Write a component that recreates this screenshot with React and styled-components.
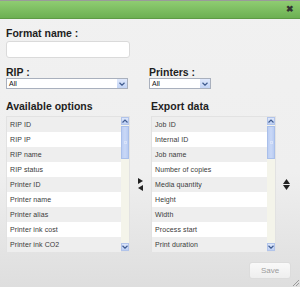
import React from "react";
import styled, { createGlobalStyle } from "styled-components";

const Global = createGlobalStyle`
  html, body { margin: 0; padding: 0; background: #e8e8e8; }
  body { font-family: "Liberation Sans", Arial, sans-serif; }
`;

const Dialog = styled.div`
  width: 300px;
  height: 287px;
  box-sizing: border-box;
  display: flex;
  flex-direction: column;
  background: linear-gradient(#f1f1f1 0%, #efefef 60%, #dedede 100%);
  position: relative;
  overflow: hidden;
`;

const TitleBar = styled.div`
  height: 19px;
  box-sizing: border-box;
  border-top: 1px solid #9a9a9a;
  border-bottom: 1px solid #5d9a45;
  background: linear-gradient(#8fcc72, #6cb052);
  display: flex;
  justify-content: flex-end;
  align-items: center;
  padding-right: 6px;
`;

const Close = styled.span`
  font-size: 9px;
  font-weight: bold;
  color: #333;
  line-height: 1;
`;

const Body = styled.div`
  flex: 1;
  padding: 0 6px;
  display: flex;
  flex-direction: column;
`;

const Label = styled.div`
  font-size: 10.5px;
  font-weight: bold;
  color: #1e1e1e;
  line-height: 12px;
  margin-top: ${(p) => p.$top || 0}px;
`;

const TextInput = styled.div`
  width: 124px;
  height: 17px;
  box-sizing: border-box;
  margin-top: 2px;
  background: #fff;
  border: 1px solid #dadada;
  border-radius: 3px;
`;

const SelectRow = styled.div`
  display: grid;
  grid-template-columns: 143px 1fr;
  margin-top: 8px;
`;

const SelectGroup = styled.div`
  display: flex;
  flex-direction: column;
`;

const Select = styled.div`
  width: ${(p) => p.$w}px;
  height: 11px;
  box-sizing: border-box;
  border: 1px solid #a9b0bd;
  background: #fff;
  display: flex;
  align-items: center;
  font-size: 7px;
  color: #111;
`;

const SelectText = styled.span`
  flex: 1;
  padding-left: 2px;
  line-height: 9px;
`;

const SelectArrow = styled.div`
  width: 10px;
  height: 9px;
  background: linear-gradient(#dfe8fb, #c3d4f5);
  display: flex;
  align-items: center;
  justify-content: center;
`;

const Columns = styled.div`
  display: grid;
  grid-template-columns: 124px 21px 125px 1fr;
  margin-top: 11px;
`;

const ColLabel = styled(Label)`
  grid-column: ${(p) => p.$col};
  margin-bottom: 4px;
`;

const ListBox = styled.div`
  grid-column: ${(p) => p.$col};
  height: 136px;
  display: flex;
  background: #fff;
  border: 1px solid #e2e2e2;
  box-sizing: border-box;
`;

const Items = styled.div`
  flex: 1;
  display: flex;
  flex-direction: column;
`;

const Item = styled.div`
  height: 15px;
  flex: none;
  display: flex;
  align-items: center;
  padding-left: 3px;
  font-size: 7px;
  color: #3a3a3a;
  background: ${(p) => (p.$odd ? "#fff" : "#eeeeee")};
  letter-spacing: 0.1px;
`;

const ScrollBar = styled.div`
  width: 8px;
  display: flex;
  flex-direction: column;
  background: #f4f4ea;
`;

const ScrollBtn = styled.div`
  height: 8px;
  background: linear-gradient(#dde7fb, #bccff4);
  border: 1px solid #b2c4ea;
  box-sizing: border-box;
  display: flex;
  align-items: center;
  justify-content: center;
`;

const Thumb = styled.div`
  height: 33px;
  margin-top: 1px;
  background: linear-gradient(90deg, #bccef3, #c9d8f7 50%, #b9ccf2);
  border: 1px solid #a9bfea;
  box-sizing: border-box;
  display: flex;
  align-items: center;
  justify-content: center;
`;

const Grip = styled.div`
  width: 3px;
  height: 3px;
  border: 1px solid #d9e3f9;
  box-sizing: border-box;
`;

const Spacer = styled.div`
  flex: 1;
`;

const Mover = styled.div`
  grid-column: ${(p) => p.$col};
  display: flex;
  flex-direction: column;
  align-items: ${(p) => p.$align || "center"};
  justify-content: center;
  padding-left: ${(p) => p.$pl || 0}px;
  gap: 1px;
`;

const Footer = styled.div`
  display: flex;
  justify-content: flex-end;
  margin-top: 10px;
  padding-right: 3px;
`;

const SaveButton = styled.div`
  width: 42px;
  height: 17px;
  box-sizing: border-box;
  border: 1px solid #dcdcdc;
  border-radius: 3px;
  background: linear-gradient(#f9f9f9, #eeeeee);
  color: #9c9c9c;
  font-size: 8px;
  display: flex;
  align-items: center;
  justify-content: center;
`;

const Resize = styled.svg`
  position: absolute;
  right: 1px;
  bottom: 1px;
`;

const Chevron = ({ up }) => (
  <svg width="6" height="4" viewBox="0 0 6 4">
    <path
      d={up ? "M0.5 3.5 L3 1 L5.5 3.5" : "M0.5 0.8 L3 3.2 L5.5 0.8"}
      fill="none"
      stroke="#3f5b8f"
      strokeWidth="1.2"
    />
  </svg>
);

const Tri = ({ dir }) => {
  const pts = {
    right: "0,0 5,3 0,6",
    left: "5,0 0,3 5,6",
    up: "0,5 3.5,0 7,5",
    down: "0,0 7,0 3.5,5",
  }[dir];
  const w = dir === "up" || dir === "down" ? 7 : 5;
  const h = dir === "up" || dir === "down" ? 5 : 6;
  return (
    <svg width={w} height={h} viewBox={`0 0 ${w} ${h}`}>
      <polygon points={pts} fill="#222" />
    </svg>
  );
};

const available = [
  "RIP ID",
  "RIP IP",
  "RIP name",
  "RIP status",
  "Printer ID",
  "Printer name",
  "Printer alias",
  "Printer ink cost",
  "Printer ink CO2",
];

const exported = [
  "Job ID",
  "Internal ID",
  "Job name",
  "Number of copies",
  "Media quantity",
  "Height",
  "Width",
  "Process start",
  "Print duration",
];

const List = ({ items, col }) => (
  <ListBox $col={col}>
    <Items>
      {items.map((t, i) => (
        <Item key={t} $odd={i % 2 === 1}>
          {t}
        </Item>
      ))}
    </Items>
    <ScrollBar>
      <ScrollBtn>
        <Chevron up />
      </ScrollBtn>
      <Thumb>
        <Grip />
      </Thumb>
      <Spacer />
      <ScrollBtn>
        <Chevron />
      </ScrollBtn>
    </ScrollBar>
  </ListBox>
);

export default function App() {
  return (
    <>
      <Global />
      <Dialog>
        <TitleBar>
          <Close>✖</Close>
        </TitleBar>
        <Body>
          <Label $top={8}>Format name :</Label>
          <TextInput />
          <SelectRow>
            <SelectGroup>
              <Label>RIP :</Label>
              <Select $w={122}>
                <SelectText>All</SelectText>
                <SelectArrow>
                  <Chevron />
                </SelectArrow>
              </Select>
            </SelectGroup>
            <SelectGroup>
              <Label>Printers :</Label>
              <Select $w={62}>
                <SelectText>All</SelectText>
                <SelectArrow>
                  <Chevron />
                </SelectArrow>
              </Select>
            </SelectGroup>
          </SelectRow>
          <Columns>
            <ColLabel $col="1">Available options</ColLabel>
            <ColLabel $col="3 / 5">Export data</ColLabel>
            <List items={available} col="1" />
            <Mover $col="2">
              <Tri dir="right" />
              <Tri dir="left" />
            </Mover>
            <List items={exported} col="3" />
            <Mover $col="4" $align="flex-start" $pl={7}>
              <Tri dir="up" />
              <Tri dir="down" />
            </Mover>
          </Columns>
          <Footer>
            <SaveButton>Save</SaveButton>
          </Footer>
        </Body>
        <Resize width="7" height="7" viewBox="0 0 7 7">
          <path d="M7 1 L1 7 M7 4 L4 7" stroke="#888" strokeWidth="0.8" />
        </Resize>
      </Dialog>
    </>
  );
}
